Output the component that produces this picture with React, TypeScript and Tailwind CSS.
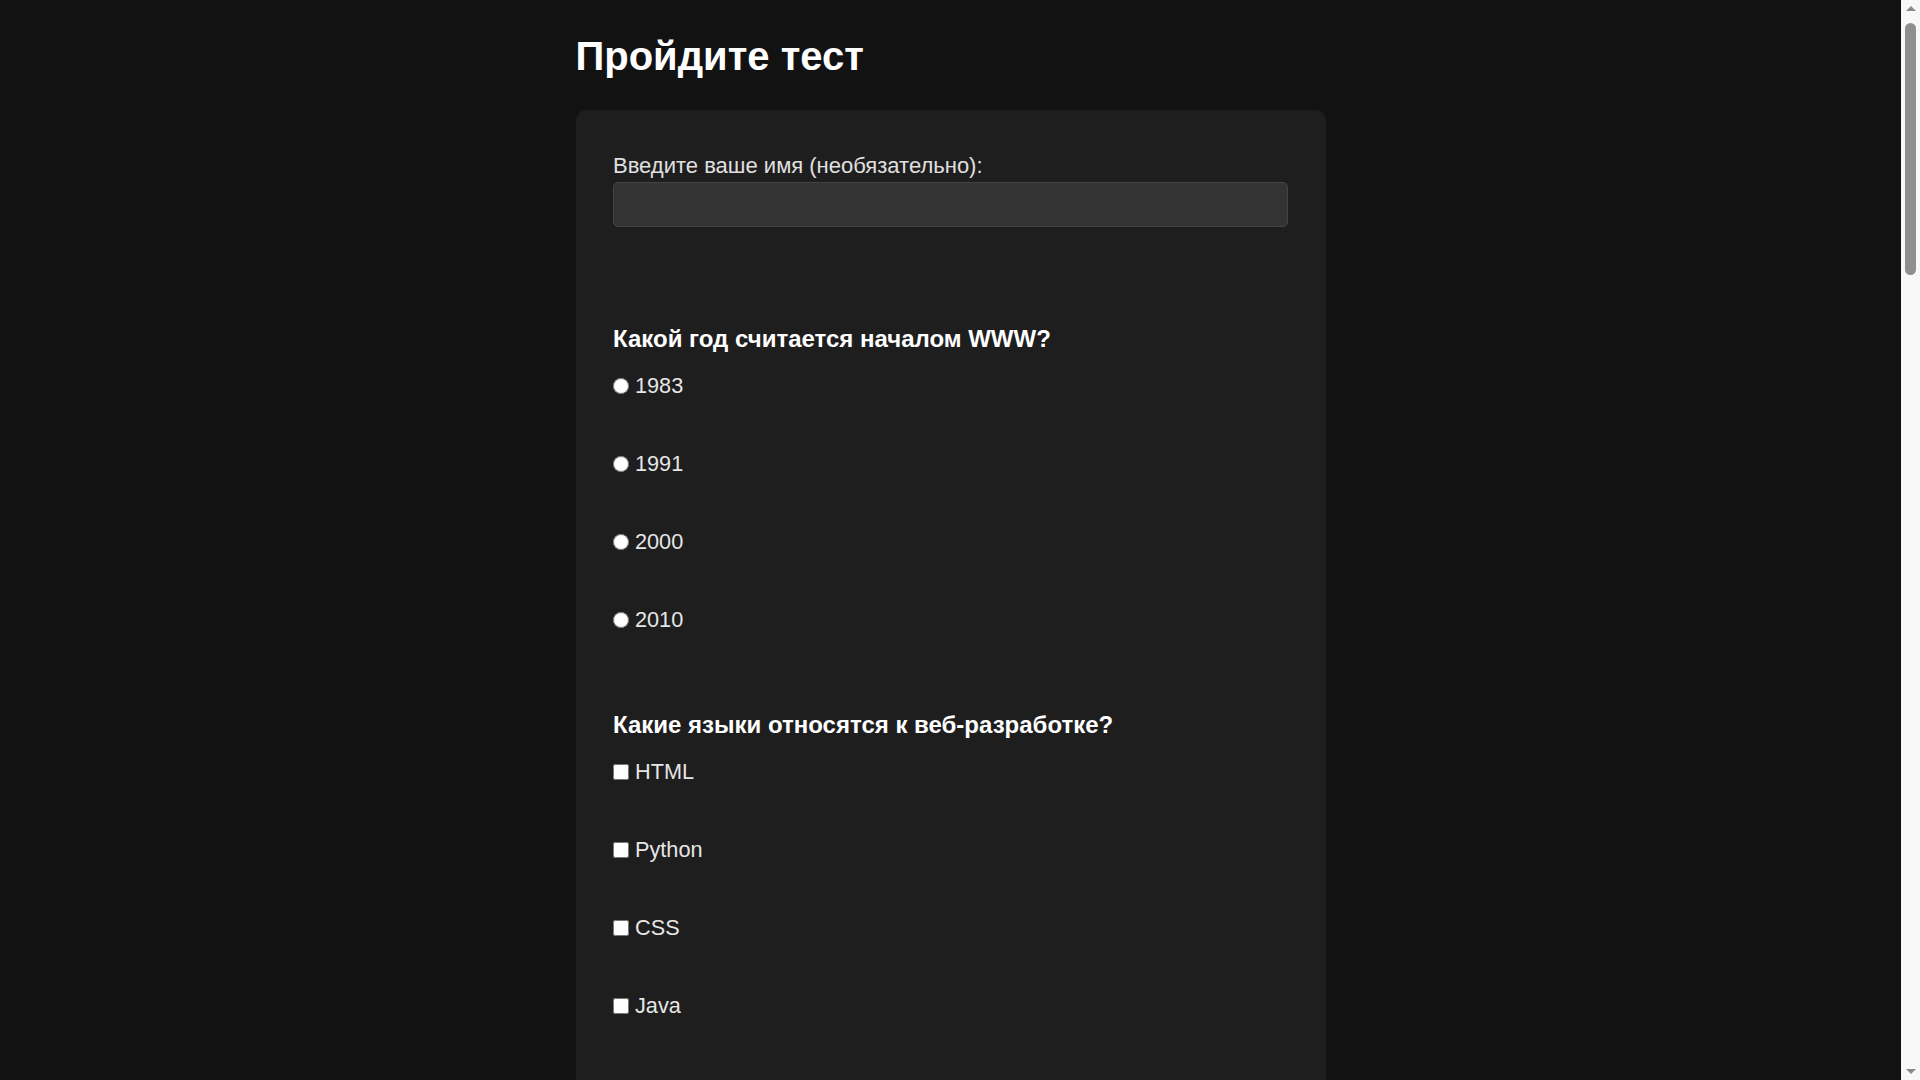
import React from "react";

type Question = {
  id: string;
  title: string;
  type: "radio" | "checkbox" | "text";
  options?: string[];
};

const questions: Question[] = [
  { id: "q1", title: "Какой год считается началом WWW?", type: "radio", options: ["1983", "1991", "2000", "2010"] },
  { id: "q2", title: "Какие языки относятся к веб-разработке?", type: "checkbox", options: ["HTML", "Python", "CSS", "Java"] },
  { id: "q3", title: "Что означает аббревиатура HTML?", type: "radio", options: ["HyperText Markup Language", "High Tech Modern Language", "Home Tool Markup Language", "Hyperlink Text Mode Language"] },
  { id: "q4", title: "Какой тег используется для ссылки?", type: "radio", options: ["<a>", "<link>", "<href>", "<url>"] },
  { id: "q5", title: "Какие свойства относятся к CSS?", type: "checkbox", options: ["color", "margin", "onclick", "padding"] },
  { id: "q6", title: "Кто создал World Wide Web?", type: "radio", options: ["Билл Гейтс", "Тим Бернерс-Ли", "Стив Джобс", "Линус Торвальдс"] },
  { id: "q7", title: "Какой язык выполняется в браузере?", type: "radio", options: ["C++", "JavaScript", "PHP", "Go"] },
  { id: "q8", title: "Какие из них являются браузерами?", type: "checkbox", options: ["Chrome", "Firefox", "Photoshop", "Safari"] },
  { id: "q9", title: "Что такое HTTP?", type: "radio", options: ["Протокол передачи данных", "Язык программирования", "Браузер", "База данных"] },
  { id: "q10", title: "Какой тег создаёт заголовок первого уровня?", type: "radio", options: ["<h1>", "<head>", "<title>", "<header>"] },
  { id: "q11", title: "Что такое DOM? (ответьте своими словами)", type: "text" },
];

function Option({ name, type, label }: { name: string; type: "radio" | "checkbox"; label: string }) {
  return (
    <label className="flex items-center gap-[6px] h-[25px] text-[21.7px] leading-[25px] text-[#e6e6e6]">
      <input type={type} name={name} className="m-0 w-[16px] h-[16px] shrink-0" />
      <span>{label}</span>
    </label>
  );
}

// page scrollbar as it shows in the screenshot
function Scrollbar() {
  return (
    <div aria-hidden className="w-[19px] shrink-0 bg-[#f8f8f8] flex flex-col items-center">
      <div className="h-[17px] flex items-center justify-center">
        <div className="w-0 h-0 border-l-[5px] border-r-[5px] border-b-[5px] border-l-transparent border-r-transparent border-b-[#8a8a8a]" />
      </div>
      <div className="mt-[6px] w-[11px] h-[252px] rounded-full bg-[#8f8f8f]" />
      <div className="flex-1" />
      <div className="h-[17px] flex items-center justify-center">
        <div className="w-0 h-0 border-l-[5px] border-r-[5px] border-t-[5px] border-l-transparent border-r-transparent border-t-[#8a8a8a]" />
      </div>
    </div>
  );
}

export default function App() {
  return (
    <div className="flex h-screen bg-[#121212] font-['Liberation_Sans',Arial,sans-serif] text-[#e0e0e0]">
      <div className="flex-1 overflow-y-scroll">
        <div className="mx-auto w-[750px] pt-[33px] pb-[66px]">
          <h1 className="text-[40px] font-bold leading-[46px] text-white">Пройдите тест</h1>

          <form className="mt-[31px] rounded-[10px] bg-[#1e1e1e] px-[37.5px] pt-[43px] pb-[37.5px]">
            <label htmlFor="username" className="block text-[22px] leading-[25px] text-[#e0e0e0]">
              Введите ваше имя (необязательно):
            </label>
            <input
              id="username"
              type="text"
              className="mt-[4px] block w-full h-[45px] rounded-[5px] border border-[#444] bg-[#333] px-[12px] text-[20px] text-white outline-none"
            />

            <div className="mt-[98px] flex flex-col gap-[79px]">
              {questions.map((q) => (
                <div key={q.id}>
                  <h3 className="text-[24px] font-bold leading-[28px] text-white">{q.title}</h3>
                  {q.type === "text" ? (
                    <input
                      type="text"
                      name={q.id}
                      className="mt-[20px] block w-full h-[45px] rounded-[5px] border border-[#444] bg-[#333] px-[12px] text-[20px] text-white outline-none"
                    />
                  ) : (
                    <div className="mt-[20px] flex flex-col gap-[53px]">
                      {q.options!.map((opt) => (
                        <Option key={opt} name={q.id} type={q.type as "radio" | "checkbox"} label={opt} />
                      ))}
                    </div>
                  )}
                </div>
              ))}
            </div>

            <button
              type="button"
              className="mt-[40px] h-[50px] w-full rounded-[5px] bg-[#3a3a3a] text-[20px] font-bold text-white"
            >
              Отправить
            </button>
          </form>
        </div>
      </div>
      <Scrollbar />
    </div>
  );
}
